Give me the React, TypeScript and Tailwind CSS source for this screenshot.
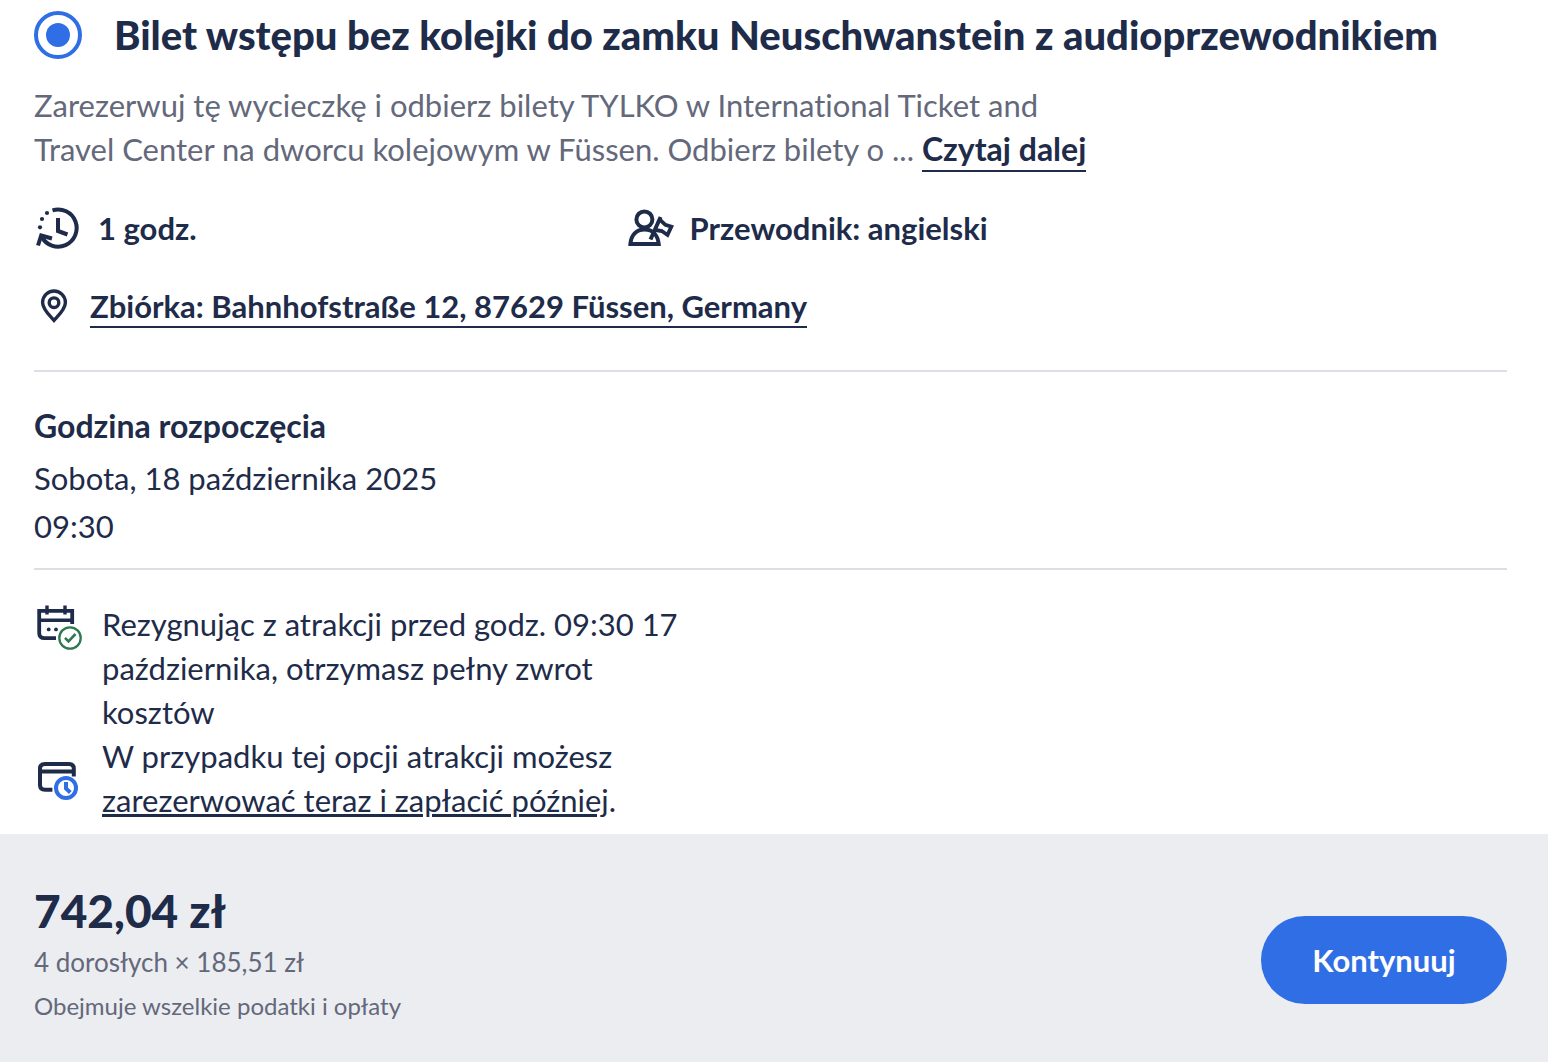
import type { ReactNode } from 'react'

interface IconProps {
  className?: string
}

function DurationIcon({ className }: IconProps) {
  return (
    <svg viewBox="0 0 48 48" className={className} fill="none" stroke="currentColor" strokeWidth="4" aria-hidden="true">
      <path d="M18.5 6.3A18.6 18.6 0 1 1 7.5 32.5" />
      <path d="M4 41.5L7.2 31.5L18 34.5" />
      <path d="M24 14V27L33.5 30.5" />
      <g fill="currentColor" stroke="none">
        <circle cx="13" cy="9" r="2.1" />
        <circle cx="8" cy="15" r="2.1" />
        <circle cx="6" cy="23.3" r="2.1" />
      </g>
    </svg>
  )
}

function GuideIcon({ className }: IconProps) {
  return (
    <svg viewBox="0 0 48 48" className={className} fill="none" stroke="currentColor" strokeWidth="4" aria-hidden="true">
      <circle cx="18.4" cy="15.4" r="8" />
      <path d="M4.4 40C5 31 10.5 25.5 18.5 25.5S31.8 31 32.7 40Z" />
      <path d="M24.5 35.5L34.6 13" />
      <path d="M33 14.8L39.4 20.8L45.4 22.6L41.5 31L35.8 27L29.5 26" strokeWidth="3.8" />
    </svg>
  )
}

function PinIcon({ className }: IconProps) {
  return (
    <svg viewBox="0 0 40 40" className={className} fill="none" stroke="currentColor" strokeWidth="3.4" aria-hidden="true">
      <path d="M20 34.4C16.5 30.3 8.6 23.4 8.6 16.4A11.4 11.4 0 0 1 31.4 16.4C31.4 23.4 23.5 30.3 20 34.4Z" />
      <circle cx="20" cy="16.7" r="4.8" />
    </svg>
  )
}

function FreeCancellationIcon({ className }: IconProps) {
  return (
    <svg viewBox="0 0 48 48" className={className} fill="none" stroke="currentColor" strokeWidth="3.8" aria-hidden="true">
      <path d="M22 36.2H10.5Q5.2 36.2 5.2 31V8.8H38.2V22" />
      <path d="M5 18.3H38M13 3.5V12.5M31 3.5V12.5" strokeWidth="3.4" />
      <g fill="currentColor" stroke="none">
        <circle cx="14.7" cy="27.4" r="1.9" />
        <circle cx="22" cy="27.4" r="1.9" />
      </g>
      <g stroke="#2d7a50" strokeWidth="2.3">
        <circle cx="36" cy="36" r="10.7" />
        <path d="M31 35.8L34.5 39.4L41.5 32" strokeWidth="2.6" />
      </g>
    </svg>
  )
}

function PayLaterIcon({ className }: IconProps) {
  return (
    <svg viewBox="0 0 48 48" className={className} fill="none" stroke="currentColor" strokeWidth="4" aria-hidden="true">
      <path d="M18.4 35.8H11Q6 35.8 6 31V14.5Q6 10 11 10H35Q39.8 10 39.8 14.5V22.4" />
      <path d="M6 17.4H39.5" />
      <g stroke="#2f6ee5">
        <circle cx="32" cy="34" r="10" />
        <path d="M32 28V34.5L36.3 38.5" />
      </g>
    </svg>
  )
}

interface PerkProps {
  icon: ReactNode
  children: ReactNode
}

function Perk({ icon, children }: PerkProps) {
  return (
    <li className="flex gap-5 text-[31px] leading-[44px]">
      {icon}
      <p>{children}</p>
    </li>
  )
}

export default function App() {
  return (
    <main className="bg-white font-['Lato',sans-serif] text-[#1e2b49] [font-variant-ligatures:none]">
      <section className="pt-[11px] pr-[41px] pb-3 pl-[34px]">
        <div className="flex items-center gap-8">
          <input
            id="option"
            type="radio"
            name="option"
            defaultChecked
            className="grid size-12 shrink-0 appearance-none place-content-center rounded-full border-4 border-[#2f6ee5] before:size-6 before:rounded-full checked:before:bg-[#2f6ee5]"
          />
          <label htmlFor="option" className="text-[40px] leading-[48px] font-black">
            Bilet wstępu bez kolejki do zamku Neuschwanstein z audioprzewodnikiem
          </label>
        </div>

        <p className="mt-6 text-[31px] leading-[44px] text-[#63687a]">
          Zarezerwuj tę wycieczkę i odbierz bilety TYLKO w International Ticket and
          <br />
          Travel Center na dworcu kolejowym w Füssen. Odbierz bilety o ...{' '}
          <a href="#more" className="border-b-2 border-[#1e2b49] pb-0.5 text-[32px] font-bold text-[#1e2b49]">
            Czytaj dalej
          </a>
        </p>

        <div className="mt-8 grid grid-cols-[2fr_3fr] gap-1 text-[31px] leading-[50px] font-bold">
          <div className="flex items-center gap-4">
            <DurationIcon className="size-12 shrink-0" />
            1 godz.
          </div>
          <div className="flex items-center gap-4">
            <GuideIcon className="size-12 shrink-0" />
            Przewodnik: angielski
          </div>
        </div>

        <div className="mt-[33px] flex items-start gap-4">
          <PinIcon className="size-10 shrink-0" />
          <a href="#meeting-point" className="border-b-2 border-[#1e2b49] text-[31px] leading-[40px] font-bold">
            Zbiórka: Bahnhofstraße 12, 87629 Füssen, Germany
          </a>
        </div>

        <div className="mt-[42px] border-y-2 border-[#dcdfe4] pt-8 pb-[18px]">
          <h2 className="text-[32px] leading-[44px] font-bold">Godzina rozpoczęcia</h2>
          <p className="mt-1.5 text-[31px] leading-[48px]">
            Sobota, 18 października 2025
            <br />
            09:30
          </p>
        </div>

        <ul className="mt-8">
          <Perk icon={<FreeCancellationIcon className="size-12 shrink-0" />}>
            Rezygnując z atrakcji przed godz. 09:30 17
            <br />
            października, otrzymasz pełny zwrot
            <br />
            kosztów
          </Perk>
          <Perk icon={<PayLaterIcon className="size-12 shrink-0 self-center" />}>
            W przypadku tej opcji atrakcji możesz
            <br />
            <a href="#pay-later" className="underline decoration-3 underline-offset-2">
              zarezerwować teraz i zapłacić później
            </a>
            .
          </Perk>
        </ul>
      </section>

      <footer className="flex items-end justify-between bg-[#ecedf1] pt-12 pr-[41px] pb-[34px] pl-[34px]">
        <div className="text-[#63687a]">
          <p className="text-[46px] leading-[58px] font-black text-[#1e2b49]">742,04 zł</p>
          <p className="text-[26px] leading-[44px]">4 dorosłych × 185,51 zł</p>
          <p className="text-[24px] leading-[44px]">Obejmuje wszelkie podatki i opłaty</p>
        </div>
        <button type="button" className="mb-6 h-[88px] w-[246px] rounded-full bg-[#2f6ee5] text-[31px] font-bold text-white">
          Kontynuuj
        </button>
      </footer>
    </main>
  )
}
